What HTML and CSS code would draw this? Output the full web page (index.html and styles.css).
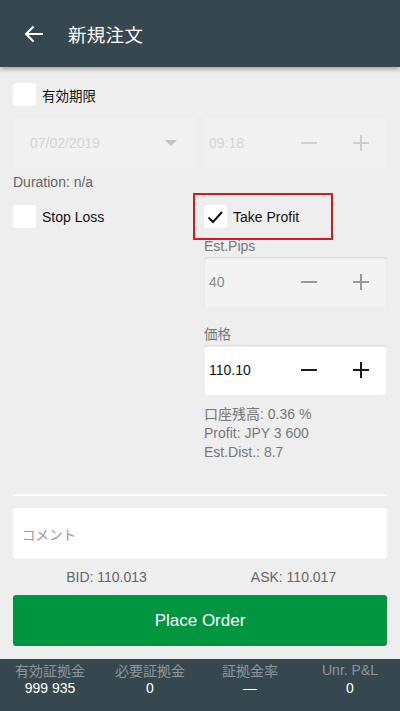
FILE: index.html
```html
<!DOCTYPE html>
<html lang="ja">
<head>
<meta charset="utf-8">
<meta name="viewport" content="width=400">
<title>新規注文</title>
<link rel="stylesheet" href="styles.css">
</head>
<body>
<header class="appbar">
  <svg class="back" width="20" height="18" viewBox="0 0 20 18" aria-hidden="true">
    <path d="M19 9H2M9.5 1.5L2 9l7.5 7.5" fill="none" stroke="#fff" stroke-width="2"/>
  </svg>
  <h1 class="title">新規注文</h1>
</header>

<main class="form">
  <label class="check-row expiry"><span class="box"></span><span class="check-label">有効期限</span></label>

  <div class="two-col dates">
    <div class="field disabled select">
      <span class="value">07/02/2019</span>
      <span class="caret"></span>
    </div>
    <div class="field disabled stepper">
      <span class="value">09:18</span>
      <span class="step minus"><svg width="16" height="16" viewBox="0 0 16 16"><path d="M0 8h16" stroke="currentColor" stroke-width="2"/></svg></span>
      <span class="step plus"><svg width="16" height="16" viewBox="0 0 16 16"><path d="M0 8h16M8 0v16" stroke="currentColor" stroke-width="2"/></svg></span>
    </div>
  </div>

  <div class="note">Duration: n/a</div>

  <div class="two-col orders">
    <div class="col">
      <label class="check-row"><span class="box"></span><span class="check-label">Stop Loss</span></label>
    </div>
    <div class="col">
      <label class="check-row tp"><span class="box checked"><svg width="23" height="23" viewBox="0 0 23 23"><path d="M4.5 12.5l4.5 4.5 9-10" fill="none" stroke="#111" stroke-width="2"/></svg></span><span class="check-label">Take Profit</span></label>
      <div class="field-label first">Est.Pips</div>
      <div class="field pips stepper">
        <span class="value">40</span>
        <span class="step minus"><svg width="16" height="16" viewBox="0 0 16 16"><path d="M0 8h16" stroke="currentColor" stroke-width="2"/></svg></span>
        <span class="step plus"><svg width="16" height="16" viewBox="0 0 16 16"><path d="M0 8h16M8 0v16" stroke="currentColor" stroke-width="2"/></svg></span>
      </div>
      <div class="field-label second">価格</div>
      <div class="field price stepper">
        <span class="value">110.10</span>
        <span class="step minus"><svg width="16" height="16" viewBox="0 0 16 16"><path d="M0 8h16" stroke="currentColor" stroke-width="2"/></svg></span>
        <span class="step plus"><svg width="16" height="16" viewBox="0 0 16 16"><path d="M0 8h16M8 0v16" stroke="currentColor" stroke-width="2"/></svg></span>
      </div>
      <div class="info">
        <div>口座残高: 0.36 %</div>
        <div>Profit: JPY 3 600</div>
        <div>Est.Dist.: 8.7</div>
      </div>
    </div>
  </div>

  <div class="divider"></div>

  <div class="comment">コメント</div>

  <div class="quotes">
    <span>BID: 110.013</span>
    <span>ASK: 110.017</span>
  </div>

  <button class="place">Place Order</button>
</main>

<footer class="stats">
  <div class="stat"><div class="stat-label">有効証拠金</div><div class="stat-value">999 935</div></div>
  <div class="stat"><div class="stat-label">必要証拠金</div><div class="stat-value">0</div></div>
  <div class="stat"><div class="stat-label">証拠金率</div><div class="stat-value">—</div></div>
  <div class="stat"><div class="stat-label">Unr. P&amp;L</div><div class="stat-value">0</div></div>
</footer>
</body>
</html>
```
FILE: styles.css
```css
* { box-sizing: border-box; }

html, body {
  margin: 0;
  padding: 0;
}

body {
  width: 400px;
  height: 711px;
  overflow: hidden;
  background: #eeeeee;
  font-family: "Liberation Sans", "Noto Sans CJK JP", Arial, sans-serif;
  font-size: 14px;
  color: #222;
  display: flex;
  flex-direction: column;
}

.appbar {
  height: 67px;
  flex: 0 0 67px;
  background: #37474f;
  display: flex;
  align-items: center;
  padding-left: 24px;
  box-shadow: 0 2px 5px rgba(0, 0, 0, 0.35);
  position: relative;
  z-index: 1;
}

.back { display: block; }

.title {
  margin: 0 0 0 24px;
  font-family: "Noto Sans CJK JP", sans-serif;
  font-weight: 400;
  font-size: 18.5px;
  color: #fff;
  letter-spacing: 0.3px;
}

.form {
  flex: 1 1 auto;
  padding: 0 13px;
  display: flex;
  flex-direction: column;
}

.check-row {
  display: flex;
  align-items: center;
  height: 23px;
}

.expiry { margin-top: 16px; }

.box {
  width: 23px;
  height: 23px;
  flex: 0 0 23px;
  background: #fff;
  border-radius: 3px;
  display: block;
}

.box svg { display: block; }

.check-label {
  margin-left: 6px;
  font-size: 14px;
  color: #111;
}

.expiry .check-label {
  font-family: "Noto Sans CJK JP", sans-serif;
  font-size: 13.5px;
}

.two-col {
  display: grid;
  grid-template-columns: 183px 183px;
  column-gap: 8px;
}

.dates { margin-top: 12px; }

.field {
  height: 50px;
  border-radius: 3px;
  display: flex;
  align-items: center;
  padding-left: 5px;
  font-size: 14px;
}

.field .value { flex: 1 1 auto; }

.disabled {
  background: #f1f1f1;
  color: #d4d4d4;
}

.select { padding-left: 17px; padding-right: 19px; }

.caret {
  width: 0;
  height: 0;
  border-left: 6px solid transparent;
  border-right: 6px solid transparent;
  border-top: 6px solid #c2c2c2;
}

.step {
  width: 52px;
  height: 50px;
  flex: 0 0 52px;
  display: flex;
  align-items: center;
  justify-content: center;
}

.step svg { display: block; }

.plus { margin-right: 0; }

.disabled .step { color: #cfcfcf; }

.note {
  margin-top: 6px;
  line-height: 16px;
  color: #666;
  font-size: 14px;
}

.orders { margin-top: 15px; }

.col {
  display: flex;
  flex-direction: column;
}

.tp { position: relative; }

.tp::after {
  content: "";
  position: absolute;
  left: -11px;
  top: -12px;
  width: 136px;
  height: 43px;
  border: 2px solid #e3141b;
}

.field-label {
  line-height: 16px;
  color: #777;
  font-size: 14px;
}

.field-label.first { margin-top: 10px; }
.field-label.second {
  margin-top: 18px;
  font-family: "Noto Sans CJK JP", sans-serif;
  font-size: 13.5px;
}

.pips {
  margin-top: 3px;
  background: #f3f3f3;
  color: #8a8a8a;
  box-shadow: inset 0 1px 2px rgba(0, 0, 0, 0.12);
}

.pips .step { color: #9a9a9a; }

.price {
  margin-top: 4px;
  background: #fff;
  color: #111;
  box-shadow: inset 0 1px 2px rgba(0, 0, 0, 0.2);
}

.price .step { color: #1a1a1a; }

.info {
  margin-top: 10px;
  line-height: 19px;
  color: #777;
  font-size: 14px;
}

.info div:first-child {
  font-family: "Liberation Sans", "Noto Sans CJK JP", sans-serif;
}

.divider {
  margin-top: 32px;
  height: 2px;
  background: #fff;
}

.comment {
  margin-top: 12px;
  height: 51px;
  background: #fff;
  border-radius: 3px;
  display: flex;
  align-items: center;
  padding-left: 9px;
  color: #9a9a9a;
  font-family: "Noto Sans CJK JP", sans-serif;
  font-size: 13.5px;
}

.quotes {
  margin-top: 10px;
  display: grid;
  grid-template-columns: 1fr 1fr;
  line-height: 16px;
  color: #666;
  text-align: center;
  font-size: 14px;
}

.place {
  margin-top: 10px;
  height: 51px;
  border: 0;
  border-radius: 3px;
  background: #009640;
  color: #fff;
  font-family: "Liberation Sans", Arial, sans-serif;
  font-size: 17px;
  width: 100%;
}

.stats {
  flex: 0 0 52px;
  height: 52px;
  background: #37474f;
  display: grid;
  grid-template-columns: repeat(4, 1fr);
  text-align: center;
  padding-top: 2px;
}

.stat-label {
  color: #8c979c;
  font-size: 14px;
  line-height: 19px;
  font-family: "Noto Sans CJK JP", sans-serif;
}

.stat:last-child .stat-label {
  font-family: "Liberation Sans", Arial, sans-serif;
}

.stat-value {
  color: #fff;
  font-size: 14px;
  line-height: 16px;
}
```
